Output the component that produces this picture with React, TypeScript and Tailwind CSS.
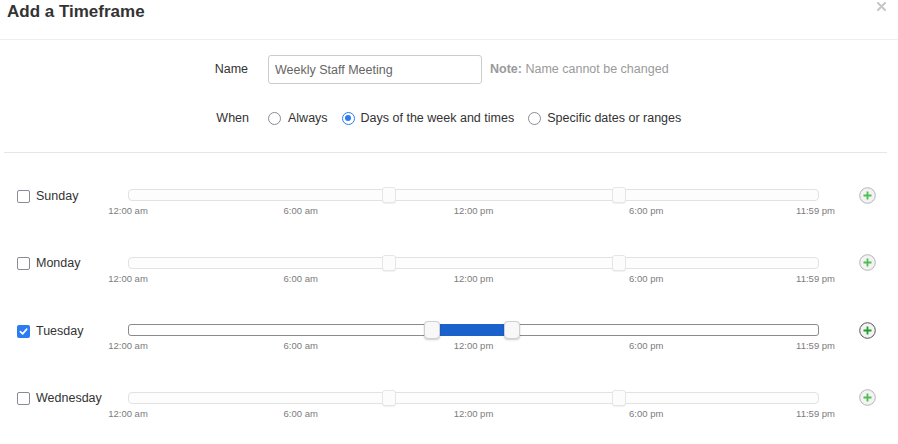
import React from 'react';

interface DayRowProps {
  day: string;
  checked?: boolean;
  start: number;
  end: number;
}

const ticks = [
  { label: '12:00 am', pct: 0 },
  { label: '6:00 am', pct: 25 },
  { label: '12:00 pm', pct: 50 },
  { label: '6:00 pm', pct: 75 },
];

function Checkbox({ checked }: { checked?: boolean }) {
  if (checked) {
    return (
      <span className="flex h-[13px] w-[13px] items-center justify-center rounded-[2px] bg-[#2b7cf0]">
        <svg width="9" height="9" viewBox="0 0 10 10" fill="none">
          <path d="M1.5 5.2 4 7.6 8.6 2.4" stroke="white" strokeWidth="1.8" strokeLinecap="round" strokeLinejoin="round" />
        </svg>
      </span>
    );
  }
  return <span className="h-[13px] w-[13px] rounded-[2px] border-[1.5px] border-[#8c8a98] bg-white" />;
}

function Radio({ selected }: { selected?: boolean }) {
  if (selected) {
    return (
      <span className="flex h-[13px] w-[13px] items-center justify-center rounded-full border-[1.5px] border-[#2b7cf0] bg-white">
        <span className="h-[6px] w-[6px] rounded-full bg-[#2b7cf0]" />
      </span>
    );
  }
  return <span className="h-[13px] w-[13px] rounded-full border border-[#8c8a98] bg-white" />;
}

function PlusButton({ active }: { active?: boolean }) {
  return (
    <svg width="17" height="17" viewBox="0 0 17 17">
      <circle cx="8.5" cy="8.5" r="7.8" fill="#f3f3f3" stroke={active ? '#555' : '#b4b4b4'} strokeWidth="1" />
      <path d="M8.5 4.5v8M4.5 8.5h8" stroke={active ? '#1e9e2a' : '#4cc04f'} strokeWidth="1.8" />
    </svg>
  );
}

function DayRow({ day, checked, start, end }: DayRowProps) {
  const p1 = (start / 24) * 100;
  const p2 = (end / 24) * 100;
  return (
    <div className="h-[67.5px]">
      <div className="flex h-[22px] items-center">
        {/* Day checkbox */}
        <div className="flex w-[128px] items-center gap-[6px] pl-[17px] pt-[2px]">
          <Checkbox checked={checked} />
          <span className="text-[12.5px] text-[#333]">{day}</span>
        </div>

        {/* Slider track */}
        <div
          className={
            checked
              ? 'relative h-[12px] flex-1 rounded-[3px] border border-[#8a8a8a] bg-white'
              : 'relative h-[12px] flex-1 rounded-[4px] border border-[#e2e2e2] bg-[#fdfdfd]'
          }
        >
          {checked && (
            <div
              className="absolute -top-px -bottom-px bg-[#1b61cb]"
              style={{ left: `${p1}%`, width: `${p2 - p1}%` }}
            />
          )}
          {[p1, p2].map((p, i) => (
            <div
              key={i}
              className={
                checked
                  ? 'absolute top-[-4px] h-[18px] w-[16px] rounded-[4px] border border-[#cfcfcf] bg-[#f8f8f8] shadow-[0_1px_2px_rgba(0,0,0,0.2)]'
                  : 'absolute top-[-3px] h-[16px] w-[14px] rounded-[3px] border border-[#e6e6e6] bg-[#fcfcfc] shadow-[0_1px_1px_rgba(0,0,0,0.06)]'
              }
              style={{ left: checked ? `calc(${p}% - 8px)` : `calc(${p}% - 5px)` }}
            />
          ))}
        </div>

        <div className="flex w-[79px] pl-[40px]">
          <PlusButton active={checked} />
        </div>
      </div>

      {/* Tick labels */}
      <div className="relative ml-[128px] mr-[79px] -mt-px h-[12px] text-[9.5px] leading-[12px] text-[#7c7c7c]">
        {ticks.map((t) => (
          <span key={t.label} className="absolute -translate-x-1/2 whitespace-nowrap" style={{ left: `${t.pct}%` }}>
            {t.label}
          </span>
        ))}
        <span className="absolute right-[-16px] whitespace-nowrap">11:59 pm</span>
      </div>
    </div>
  );
}

export default function App() {
  return (
    <div className="h-[444px] w-[898px] overflow-hidden bg-white font-['Liberation_Sans',Arial,sans-serif]">
      {/* Header */}
      <div className="flex h-[40px] items-start justify-between border-b border-[#eeeeee] pl-[7px] pr-[12px]">
        <h1 className="text-[17px] font-bold leading-[24px] text-[#333]">Add a Timeframe</h1>
        <svg width="9" height="9" viewBox="0 0 9 9" className="mt-[2px]">
          <path d="M1 1l7 7M8 1 1 8" stroke="#c6c6c6" strokeWidth="2" strokeLinecap="round" />
        </svg>
      </div>

      {/* Name */}
      <div className="mt-[15px] flex h-[29px] items-center">
        <div className="w-[250px] pr-[2px] text-right text-[12.5px] text-[#333]">Name</div>
        <input
          readOnly
          value="Weekly Staff Meeting"
          className="ml-[18px] h-[29px] w-[214px] rounded-[3px] border border-[#cccccc] px-[6px] text-[12.5px] text-[#666] outline-none"
        />
        <span className="ml-[8px] text-[12.5px] text-[#9a9a9a]">
          <b className="font-bold">Note:</b> Name cannot be changed
        </span>
      </div>

      {/* When */}
      <div className="mt-[24px] flex h-[20px] items-center text-[12.5px] text-[#333]">
        <div className="w-[250px] pr-[1px] text-right">When</div>
        <div className="ml-[18px] flex items-center gap-[7px]">
          <Radio />
          <span>Always</span>
        </div>
        <div className="ml-[14px] flex items-center gap-[6px]">
          <Radio selected />
          <span>Days of the week and times</span>
        </div>
        <div className="ml-[14px] flex items-center gap-[6px]">
          <Radio />
          <span>Specific dates or ranges</span>
        </div>
      </div>

      <div className="ml-[4px] mr-[11px] mt-[24px] h-px bg-[#e6e6e6]" />

      {/* Days */}
      <div className="mt-[31px]">
        <DayRow day="Sunday" start={9} end={17} />
        <DayRow day="Monday" start={9} end={17} />
        <DayRow day="Tuesday" checked start={10.55} end={13.35} />
        <DayRow day="Wednesday" start={9} end={17} />
      </div>
    </div>
  );
}
